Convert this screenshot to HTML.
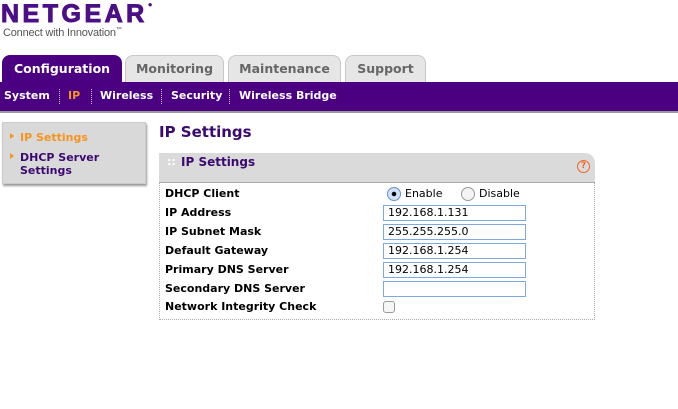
<!DOCTYPE html>
<html><head><style>
*{margin:0;padding:0;box-sizing:border-box}
body{width:678px;height:409px;background:#fff;font-family:"DejaVu Sans",Verdana,sans-serif;position:relative;overflow:hidden}
.a{position:absolute}
.logo{left:1px;top:0px;font-family:"Liberation Sans",sans-serif;font-weight:900;font-size:25px;letter-spacing:3.5px;color:#4b0f86;-webkit-text-stroke:1px #4b0f86}
.tag{left:3px;top:27px;font-family:"Liberation Sans",sans-serif;font-size:11px;color:#555;letter-spacing:-0.2px}
.tab{top:55px;height:28px;border:1px solid #c8c8c8;border-bottom:none;border-radius:8px 8px 0 0;background:#e6e6e6;color:#666;font-weight:bold;font-size:12.5px;text-align:center;line-height:26px}
.bar{left:0;top:82px;width:678px;height:31px;background:#4b0082;border-bottom:2px solid #999}
.sub{top:89px;color:#fff;font-weight:bold;font-size:11px}
.sep{top:89px;height:15px;border-left:1px dotted #ccc}
.side{left:2px;top:122px;width:144px;height:62px;background:#d9d9d9;border:1px solid #ccc;box-shadow:1px 2px 2px #999}
.lab{left:165px;font-weight:bold;font-size:11px;color:#000}
.inp{left:383px;width:143px;height:16px;border:1px solid #7fa9dc;font-size:11px;padding-left:4px;line-height:14px;font-family:"DejaVu Sans",sans-serif}
.arr{width:0;height:0;border-left:4px solid #f7941d;border-top:3px solid transparent;border-bottom:3px solid transparent}
</style></head><body>
<div class="a logo">NETGEAR<span style="font-size:8px;vertical-align:top;letter-spacing:0;-webkit-text-stroke:0">●</span></div>
<div class="a tag">Connect with Innovation<span style="font-size:6px;vertical-align:top">™</span></div>
<div class="a tab" style="left:2px;width:120px;background:#4b0082;border-color:#4b0082;color:#fff">Configuration</div>
<div class="a tab" style="left:125px;width:99px">Monitoring</div>
<div class="a tab" style="left:228px;width:113px">Maintenance</div>
<div class="a tab" style="left:345px;width:81px">Support</div>
<div class="a bar"></div>
<div class="a sub" style="left:4px">System</div>
<div class="a sep" style="left:59px"></div>
<div class="a sub" style="left:68px;color:#f7941d">IP</div>
<div class="a sep" style="left:91px"></div>
<div class="a sub" style="left:100px">Wireless</div>
<div class="a sep" style="left:161px"></div>
<div class="a sub" style="left:171px">Security</div>
<div class="a sep" style="left:229px"></div>
<div class="a sub" style="left:239px">Wireless Bridge</div>
<div class="a side"></div>
<div class="a arr" style="left:10px;top:133px"></div>
<div class="a" style="left:20px;top:131px;color:#f7941d;font-weight:bold;font-size:11px">IP Settings</div>
<div class="a arr" style="left:10px;top:153px"></div>
<div class="a" style="left:20px;top:151px;color:#3b0a6e;font-weight:bold;font-size:11px;line-height:13px">DHCP Server<br>Settings</div>
<div class="a" style="left:159px;top:123px;color:#3b0a6e;font-weight:bold;font-size:15px">IP Settings</div>
<div class="a" style="left:159px;top:182px;width:436px;height:138px;border:1px dotted #aaa;border-top:none"></div>
<div class="a" style="left:159px;top:153px;width:436px;height:30px;background:#dadada;border-radius:0 10px 0 0;border-bottom:1px solid #aaa"></div>
<div class="a" style="left:167px;top:155px;color:#fff;font-weight:bold;font-size:11px">::</div>
<div class="a" style="left:181px;top:155px;color:#3b0a6e;font-weight:bold;font-size:12px">IP Settings</div>
<div class="a" style="left:577px;top:160px;width:13px;height:13px;border:1.5px solid #f26522;border-radius:50%;color:#f26522;font-size:9px;font-weight:bold;text-align:center;line-height:10px">?</div>
<div class="a lab" style="top:187px">DHCP Client</div>
<div class="a lab" style="top:206px">IP Address</div>
<div class="a lab" style="top:225px">IP Subnet Mask</div>
<div class="a lab" style="top:244px">Default Gateway</div>
<div class="a lab" style="top:263px">Primary DNS Server</div>
<div class="a lab" style="top:282px">Secondary DNS Server</div>
<div class="a lab" style="top:300px">Network Integrity Check</div>
<div class="a" style="left:387px;top:187px;width:14px;height:14px;border-radius:50%;border:1px solid #6a8fc4;background:radial-gradient(circle,#000 0 2px,#cfe2f7 2.5px)"></div>
<div class="a" style="left:405px;top:187px;font-size:11px">Enable</div>
<div class="a" style="left:461px;top:187px;width:14px;height:14px;border-radius:50%;border:1px solid #999;background:#f4f4f4"></div>
<div class="a" style="left:479px;top:187px;font-size:11px">Disable</div>
<div class="a inp" style="top:205px">192.168.1.131</div>
<div class="a inp" style="top:224px">255.255.255.0</div>
<div class="a inp" style="top:243px">192.168.1.254</div>
<div class="a inp" style="top:262px">192.168.1.254</div>
<div class="a inp" style="top:281px"></div>
<div class="a" style="left:383px;top:301px;width:12px;height:12px;border:1px solid #999;border-radius:3px;background:#f6f6f6"></div>
</body></html>
